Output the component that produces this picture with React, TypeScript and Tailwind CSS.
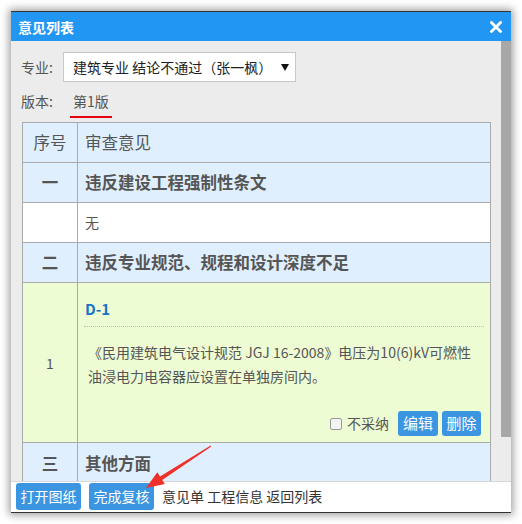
import React from "react";

const font = { fontFamily: '"Microsoft YaHei", "Noto Sans CJK SC", "Noto Sans", sans-serif' };

function Btn({ children, className = "" }: { children: React.ReactNode; className?: string }) {
  return (
    <span
      className={`inline-flex items-center justify-center rounded-[3px] bg-[#3c95e0] text-white shrink-0 ${className}`}
    >
      {children}
    </span>
  );
}

export default function App() {
  return (
    <div className="relative w-[522px] h-[524px] bg-white overflow-hidden" style={font}>
      <div className="ml-[11px] mt-[11px] w-[500px] h-[502px] flex flex-col border-t border-b border-[#333] shadow-[0_0_8px_2px_rgba(0,0,0,0.38)] bg-white">
        {/* Title bar */}
        <div className="h-[29px] bg-[#2196f3] flex items-center justify-between pl-[7px] pr-[9px] shrink-0">
          <span className="text-white text-[14px] font-bold leading-none">意见列表</span>
          <svg width="12" height="12" viewBox="0 0 12 12">
            <path d="M1.5 1.5 L10.5 10.5 M10.5 1.5 L1.5 10.5" stroke="white" strokeWidth="2.8" strokeLinecap="square" />
          </svg>
        </div>
        {/* Body */}
        <div className="flex h-[440px] bg-[#ececec] shrink-0 overflow-hidden">
          <div className="w-[490px] pl-[10px] pt-[11px] overflow-hidden">
            {/* 专业 */}
            <div className="flex items-center h-[30px]">
              <span className="w-[42px] text-[14px] text-[#555]">专业:</span>
              <div className="w-[233px] h-[30px] bg-white border border-[#c8c8c8] flex items-center justify-between pl-[9px] pr-[6px]">
                <span className="text-[14px] text-[#222]">建筑专业 结论不通过（张一枫）</span>
                <svg width="8" height="7" viewBox="0 0 8 7">
                  <path d="M0 0 H8 L4 7 Z" fill="#111" />
                </svg>
              </div>
            </div>
            {/* 版本 */}
            <div className="flex items-start mt-[9px]">
              <span className="w-[49px] text-[14px] leading-[20px] text-[#555]">版本:</span>
              <span className="px-[3px] pb-[5px] border-b-2 border-[#e60012] text-[14px] leading-[20px] text-[#555]">第1版</span>
            </div>
            {/* Table */}
            <div className="mt-[4px] ml-[1px] w-[469px] border-t border-l border-r border-[#aaa] text-[#555]">
              <div className="flex h-[40px] bg-[#dfeffd] border-b border-[#aaa]">
                <div className="w-[55px] border-r border-[#aaa] flex items-center justify-center text-[16.5px]">序号</div>
                <div className="flex-1 flex items-center pl-[7px] text-[16.5px]">审查意见</div>
              </div>
              <div className="flex h-[40px] bg-[#dfeffd] border-b border-[#aaa]">
                <div className="w-[55px] border-r border-[#aaa] flex items-center justify-center text-[16.5px] font-bold">一</div>
                <div className="flex-1 flex items-center pl-[7px] text-[16.5px] font-bold">违反建设工程强制性条文</div>
              </div>
              <div className="flex h-[40px] bg-white border-b border-[#aaa]">
                <div className="w-[55px] border-r border-[#aaa]"></div>
                <div className="flex-1 flex items-center pl-[7px] text-[14px]">无</div>
              </div>
              <div className="flex h-[40px] bg-[#dfeffd] border-b border-[#aaa]">
                <div className="w-[55px] border-r border-[#aaa] flex items-center justify-center text-[16.5px] font-bold">二</div>
                <div className="flex-1 flex items-center pl-[7px] text-[16.5px] font-bold">违反专业规范、规程和设计深度不足</div>
              </div>
              <div className="flex h-[160px] bg-[#eefcd3] border-b border-[#aaa]">
                <div className="w-[55px] border-r border-[#aaa] flex items-center justify-center text-[14px] pt-[1px]">1</div>
                <div className="flex-1 flex flex-col pl-[6px] pr-[6px] pt-[15px] pb-[6px]">
                  <div className="h-[22px] flex items-center text-[15px] font-bold text-[#1874c8] pl-[1px]">D-1</div>
                  <div className="mt-[6px] border-b border-dotted border-[#b8c4cc]"></div>
                  <div className="mt-[13px] pl-[4px] text-[14px] leading-[24px] text-[#555] whitespace-nowrap">
                    《民用建筑电气设计规范 JGJ 16-2008》电压为10(6)kV可燃性
                    <br />
                    油浸电力电容器应设置在单独房间内。
                  </div>
                  <div className="mt-auto flex items-center justify-end pr-[3px]">
                    <span className="inline-block shrink-0 w-[12px] h-[12px] border border-[#9a9a9a] rounded-[2px] bg-[#f4f4f4]"></span>
                    <span className="ml-[5px] text-[14px] text-[#555]">不采纳</span>
                    <Btn className="ml-[9px] w-[40px] h-[25px] text-[15px]">编辑</Btn>
                    <Btn className="ml-[4px] w-[39px] h-[25px] text-[15px]">删除</Btn>
                  </div>
                </div>
              </div>
              <div className="flex h-[40px] bg-[#dfeffd]">
                <div className="w-[55px] border-r border-[#aaa] flex items-center justify-center text-[16.5px] font-bold">三</div>
                <div className="flex-1 flex items-center pl-[7px] text-[16.5px] font-bold">其他方面</div>
              </div>
            </div>
          </div>
          <div className="w-[10px] flex flex-col">
            <div className="h-[396px] bg-[#a8a8a8]"></div>
          </div>
        </div>
        {/* Footer */}
        <div className="flex-1 bg-white border-t border-[#d8d8d8] flex items-center pl-[5px] pb-[1px]">
          <Btn className="w-[65px] h-[27px] text-[14px]">打开图纸</Btn>
          <Btn className="ml-[8px] w-[65px] h-[27px] text-[14px]">完成复核</Btn>
          <span className="ml-[8px] text-[14px] text-[#333]">意见单 工程信息 返回列表</span>
        </div>
      </div>
      {/* Red arrow */}
      <svg className="absolute left-0 top-0 pointer-events-none" width="522" height="524" viewBox="0 0 522 524">
        <polygon
          points="146,488 164.9,484.1 162.2,479.9 211.3,446.4 210.7,445.6 160,476.5 157.3,472.3"
          fill="#f0302b"
        />
      </svg>
    </div>
  );
}
